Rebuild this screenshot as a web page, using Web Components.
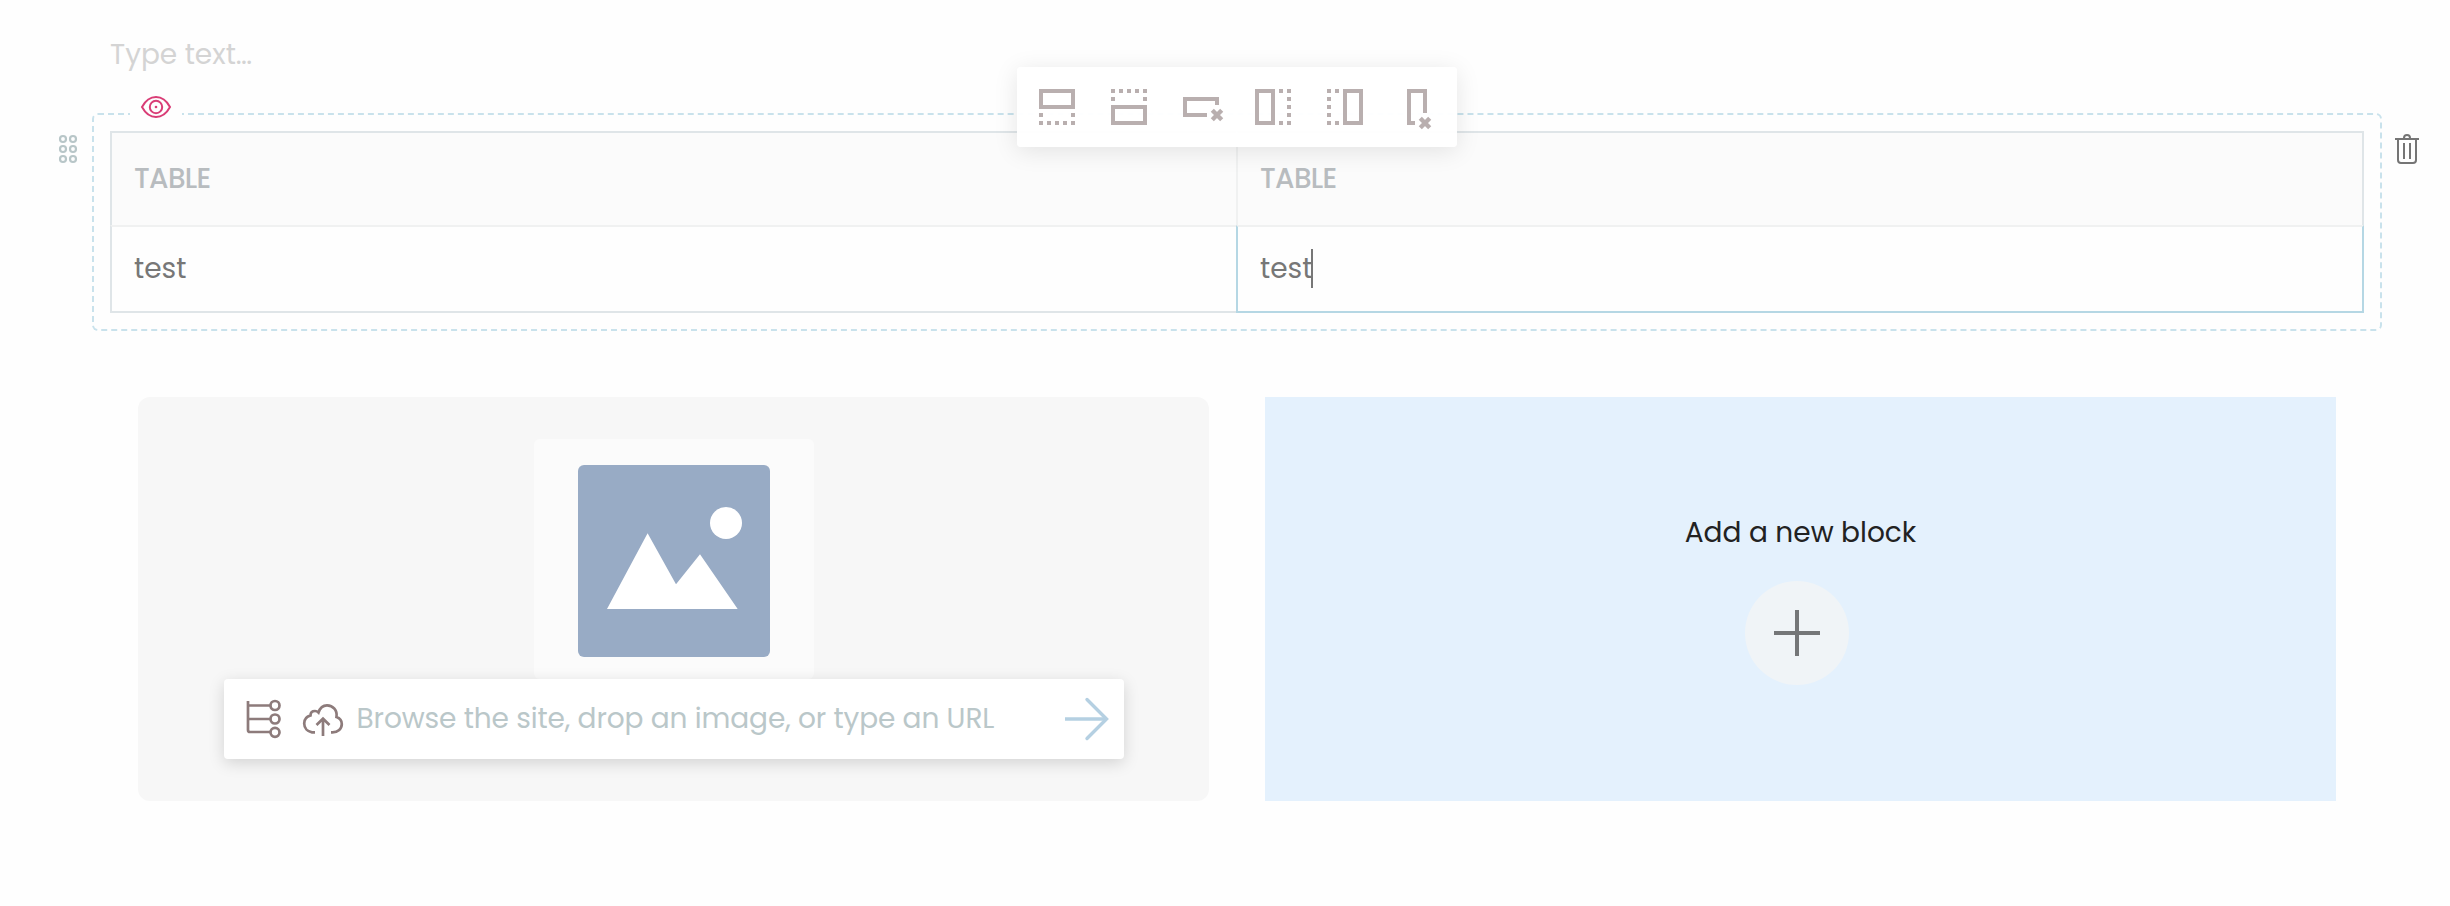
<!DOCTYPE html>
<html lang="en">
<head>
<meta charset="utf-8">
<title>Block editor</title>
<style>
html,body{margin:0;background:#fefefe}
body{width:2450px;height:906px;overflow:hidden;font:28px/40px Poppins,Inter,sans-serif}
</style>
</head>
<body>
<block-editor></block-editor>
<script>
function define(name, html, setup) {
  const t = document.createElement('template');
  t.innerHTML = html;
  customElements.define(name, class extends HTMLElement {
    constructor() {
      super();
      this.attachShadow({ mode: 'open' }).append(t.content.cloneNode(true));
    }
    connectedCallback() { if (setup) setup(this); }
  });
}

const X = '<path stroke-width="4.400" d="M-4.700-4.700 4.700 4.700M4.700-4.700-4.700 4.700"/>';
const dots = list => '<path fill="currentColor" stroke="none" d="' + list.map(p => `M${p[0]} ${p[1]}h4v4h-4z`).join('') + '"/>';
const steps = [0, 8, 16, 24, 32];
const ICONS = {
  'row-below': [36, 36, 4, '<path d="M2 2h32v16H2z"/>' + dots([[0,24],[32,24],...steps.map(x => [x,32])])],
  'row-above': [36, 36, 4, '<path d="M2 18h32v16H2z"/>' + dots([[0,8],[32,8],...steps.map(x => [x,0])])],
  'row-delete': [36, 36, 4, '<path d="M24 26H2V10h32v6"/><g transform="translate(34 26)">' + X + '</g>'],
  'col-after': [36, 36, 4, '<path d="M2 2h16v32H2z"/>' + dots([[24,0],[24,32],...steps.map(y => [32,y])])],
  'col-before': [36, 36, 4, '<path d="M18 2h16v32H18z"/>' + dots([[8,0],[8,32],...steps.map(y => [0,y])])],
  'col-delete': [36, 36, 4, '<path d="M16 34h-6V2h16v22"/><g transform="translate(26 34)">' + X + '</g>'],
  eye: [30, 22, 2, '<path d="M1 11C4.500 4.500 9.500 1 15 1s10.500 3.500 14 10c-3.500 6.500-8.500 10-14 10S4.500 17.500 1 11z"/><circle cx="15" cy="11" r="6.200"/><circle cx="15" cy="11" r="1.300" fill="currentColor" stroke="none"/>'],
  grip: [18, 28, 2.2, [4,14,24].map(y => `<circle cx="4" cy="${y}" r="3"/><circle cx="14" cy="${y}" r="3"/>`).join('')],
  trash: [24, 30, 2, '<path d="M0 5h24M3 6v20q0 3 3 3h12q3 0 3-3V6M9 9v16M15 9v16M9 4q0-3 3-3t3 3"/>'],
  tree: [36, 38, 2.7, '<path d="M2 1v29q0 2 2 2h20M2 5.500h22M2 19h22"/><circle cx="29" cy="5.500" r="4.500"/><circle cx="29" cy="19" r="4.500"/><circle cx="29" cy="32.300" r="4.500"/>'],
  cloud: [40, 32, 2.7, '<path d="M12 28.300H9C4.500 27.500 1.200 24 1.200 19.500c0-4 2.600-7 6.300-8.100C7.500 8 9.500 7 12 7c1.500 0 2.500.5 3.500 1.500C17 4 20 1.400 24 1.400c6 0 10.500 5 9.500 11.600 3.500 1.200 5.300 3.800 5.300 7.100 0 4.700-3.800 8.200-9.300 8.200H28M20 32V15M13.500 21l6.500-6.300 6.500 6.300"/>'],
  arrow: [46, 44, 3.4, '<path d="M0 22h41"/><path stroke-linecap="round" d="M22 2.500 41.500 22 22 41.500"/>'],
  plus: [46, 46, 4, '<path d="M23 0v46M0 23h46"/>']
};

define('ui-icon', `<style>:host{display:block;flex:none;line-height:0}svg{display:block;overflow:visible}</style>`, el => {
  const [w, h, s, body] = ICONS[el.getAttribute('name')];
  const box = document.createElement('div');
  box.innerHTML = `<svg width="${w}" height="${h}" viewBox="0 0 ${w} ${h}" fill="none" stroke="currentColor" stroke-width="${s}">${body}</svg>`;
  el.shadowRoot.append(box);
});

define('text-block', `<style>:host{display:block;height:79px;padding:35px 0 0 110px;box-sizing:border-box;color:#d4d4d4}</style><slot></slot>`);

define('table-toolbar', `<style>
:host{display:flex;box-sizing:border-box;width:440px;height:80px;padding:22px;gap:36px;align-items:center;border-radius:4px;background:rgba(255,255,255,.96);box-shadow:0 4px 24px rgba(0,0,0,.1);color:#b9afaf}
</style>
<ui-icon name="row-below"></ui-icon><ui-icon name="row-above"></ui-icon><ui-icon name="row-delete"></ui-icon>
<ui-icon name="col-after"></ui-icon><ui-icon name="col-before"></ui-icon><ui-icon name="col-delete"></ui-icon>`);

define('table-cell', `<style>
:host{display:flex;align-items:center;box-sizing:border-box;padding-left:22px;border:0 solid #dfe5e8;color:#777}
:host([head]){background:#fbfbfb;color:#b8bcbf;font-weight:500;letter-spacing:-.7px;border-width:2px 0 0 2px;height:94px}
:host([head][last]){border-left-color:#f0f1f1;border-right-width:2px}
:host(:not([head])){height:88px;border-width:2px 0 2px 2px;border-top-color:#f0f1f1}
:host([active]:not([head])){border-left-color:#b5d7e4;border-bottom-color:#b5d7e4;border-right:2px solid #b5d7e4}
span{position:relative}
:host([active]) span::after{content:"";position:absolute;right:-1px;top:0;width:2px;height:39px;background:#777}
</style><span><slot></slot></span>`);

define('table-block', `<style>
:host{display:grid;grid-template-columns:92px 2290px 68px;height:218px;align-items:start;margin-top:34px}
.grip{margin:22px 0 0 -1px;padding-left:60px;color:#b8c6c8}
.trash{margin:21px 0 0 13px;color:#757575}
.frame{position:relative;box-sizing:border-box;height:218px;padding:16px;border:2px dashed #c9e2ec;border-radius:6px}
.grid{display:grid;grid-template-columns:1126px 1128px}
.eye{position:absolute;left:36px;top:-20px;width:52px;height:24px;display:flex;align-items:center;justify-content:center;background:#fefefe;color:#d93d76}
table-toolbar{position:absolute;left:923px;top:-48px}
</style>
<ui-icon class="grip" name="grip"></ui-icon>
<div class="frame">
  <div class="grid">
    <table-cell head>TABLE</table-cell><table-cell head last>TABLE</table-cell>
    <table-cell>test</table-cell><table-cell active>test</table-cell>
  </div>
  <div class="eye"><ui-icon name="eye"></ui-icon></div>
  <table-toolbar></table-toolbar>
</div>
<ui-icon class="trash" name="trash"></ui-icon>`);

define('image-source', `<style>
:host{display:flex;align-items:center;box-sizing:border-box;width:900px;height:80px;padding:0 13px 0 22px;border-radius:4px;background:#fff;box-shadow:0 4px 16px rgba(0,0,0,.15);color:#8d7b7b}
.cloud{margin:2px 14px 0 21px}
.hint{flex:1;color:#bac7c9;white-space:nowrap;letter-spacing:-.11px}
.go{color:#b5d0e2}
</style><ui-icon name="tree"></ui-icon><ui-icon class="cloud" name="cloud"></ui-icon><span class="hint"><slot></slot></span><ui-icon class="go" name="arrow"></ui-icon>`);

define('image-block', `<style>
:host{display:flex;flex-direction:column;align-items:center;box-sizing:border-box;width:1071px;height:404px;padding-top:42px;border-radius:12px;background:#f7f7f7}
.card{display:flex;justify-content:center;box-sizing:border-box;width:280px;height:240px;padding-top:26px;border-radius:6px;background:#fbfbfb}
</style>
<div class="card"><svg width="192" height="192"><rect width="192" height="192" rx="6" fill="#98abc5"/><path fill="#fff" d="M29 144 69.600 68.300 98 119.300 122 89.300 159.700 144z"/><circle cx="148" cy="58" r="16" fill="#fff"/></svg></div>
<image-source><slot></slot></image-source>`);

define('add-block', `<style>
:host{display:flex;flex-direction:column;align-items:center;box-sizing:border-box;width:1071px;height:404px;padding-top:116px;background:#e4f1fd;color:#222}
.circle{display:flex;align-items:center;justify-content:center;width:104px;height:104px;margin:28px 7px 0 0;border-radius:50%;background:#f0f4f7;color:#747678}
</style><div><slot></slot></div><div class="circle"><ui-icon name="plus"></ui-icon></div>`);

define('block-editor', `<style>
:host{display:block}
.columns{display:flex;gap:56px;padding:66px 114px 0 138px}
</style>
<text-block>Type text…</text-block>
<table-block></table-block>
<div class="columns"><image-block>Browse the site, drop an image, or type an URL</image-block><add-block>Add a new block</add-block></div>`);
</script>
</body>
</html>
